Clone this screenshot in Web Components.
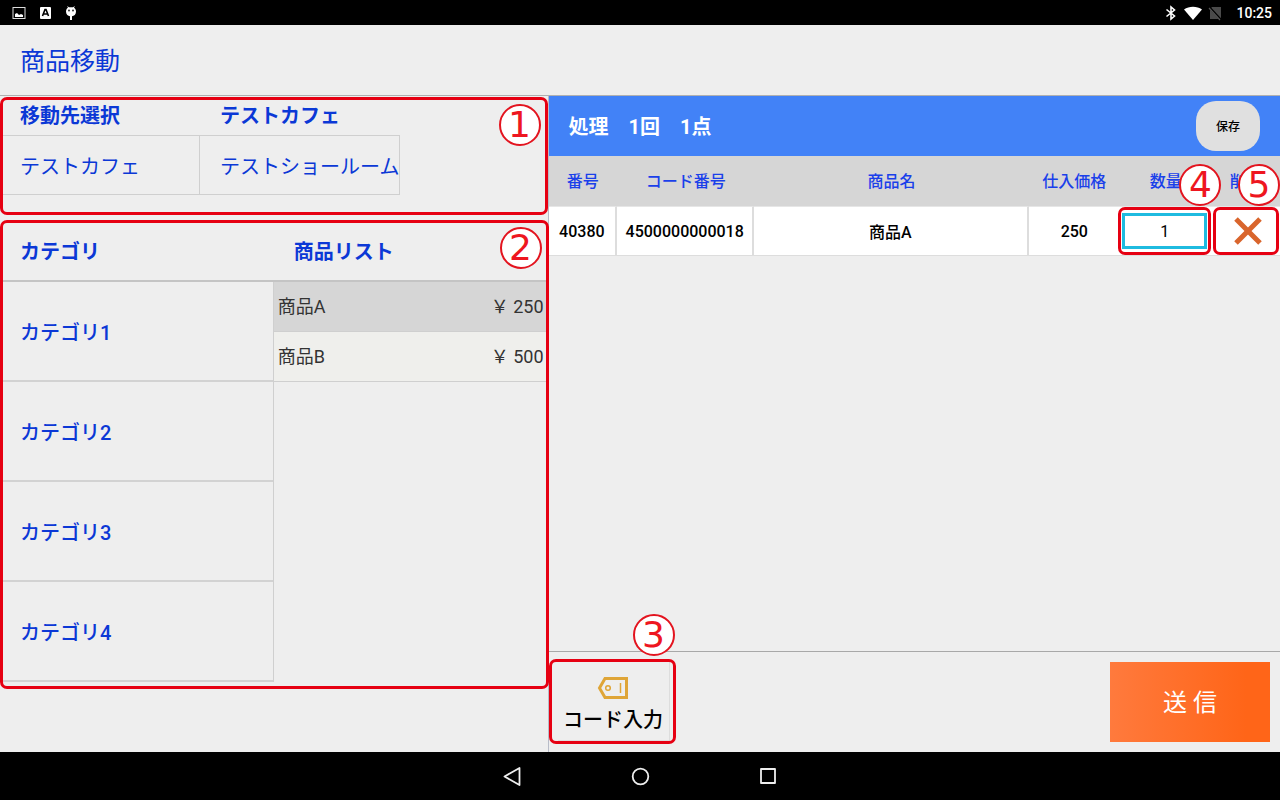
<!DOCTYPE html>
<html lang="ja">
<head>
<meta charset="utf-8">
<meta name="viewport" content="width=device-width, initial-scale=1">
<title>商品移動</title>
<style>
  html, body { margin: 0; }
  body {
    --blue: #0b38d6;
    --red: #e60012;
    --line: #cfcfcf;
    background: #eee;
    color: #000;
    font-family: Roboto, "Noto Sans CJK JP", sans-serif;
    font-size: 16px;
  }
</style>
</head>
<body>
<stock-app></stock-app>

<template id="status-bar">
  <style>
    :host { display: flex; align-items: center; gap: 12px; height: 25px; padding: 0 8px 0 12px; background: #000; color: #fff; }
    .left { display: flex; flex: 1; gap: 12px; }
    .right { display: flex; gap: 6px; align-items: center; }
    svg { display: block; width: 14px; height: 16px; }
    .wide { width: 18px; }
    time { font-size: 14px; font-weight: 500; line-height: 26px; margin-left: 8px; }
  </style>
  <div class="left">
    <svg viewBox="0 0 14 16"><rect x="1" y="2.500" width="12" height="11" fill="none" stroke="#ddd"/><path d="M3 12V9l2-1 2 2 2-1 2 1v2z" fill="#fff"/></svg>
    <svg viewBox="0 0 14 16"><rect x="2" y="2" width="11" height="12" rx="1" fill="#fff"/><path d="M4.500 11L7 4.500h1L10.500 11M5.500 9h4" fill="none" stroke="#000" stroke-width="1.600"/></svg>
    <svg viewBox="0 0 14 16"><path d="M2 6.500C2 4 3.500 3 4 2.700L3 1l2 1.200h4L11 1l-1 1.700C11.500 3.800 12 5 12 6.500 12 9.500 10 11 8 11.300V15H6v-3.700C4 11 2 9.500 2 6.500z" fill="#fff"/><circle cx="5" cy="5.500" r="1" fill="#333"/><circle cx="9" cy="5.500" r="1" fill="#333"/></svg>
  </div>
  <div class="right">
    <svg viewBox="0 0 14 16"><path d="M2.500 4.500L10.500 11 7 14V2l3.500 3L2.500 11.500" fill="none" stroke="#fff" stroke-width="1.600"/></svg>
    <svg class="wide" viewBox="0 0 18 16"><path d="M0 4.500C5 .8 13 .8 18 4.500L9 15z" fill="#fff"/></svg>
    <svg viewBox="0 0 14 16"><path d="M4 2h9v12H2V4z" fill="#4a4a4a"/><path d="M1 2l12 13" stroke="#000" stroke-width="2.500"/><path d="M1 3l11 12" stroke="#555" stroke-width="1.200"/></svg>
    <time>10:25</time>
  </div>
</template>

<template id="nav-bar">
  <style>
    :host { display: flex; justify-content: center; align-items: center; gap: 104px; height: 48px; background: #000; }
    button { display: block; width: 24px; height: 24px; padding: 0; border: 0; background: none; }
    svg { display: block; }
    svg * { fill: none; stroke: #eee; stroke-width: 1.800; stroke-linejoin: round; }
  </style>
  <button aria-label="戻る"><svg width="24" height="24" viewBox="0 0 24 24"><path d="M4.500 12.500L19.500 4v17z"/></svg></button>
  <button aria-label="ホーム"><svg width="24" height="24" viewBox="0 0 24 24"><circle cx="12.500" cy="12.500" r="7.800"/></svg></button>
  <button aria-label="履歴"><svg width="24" height="24" viewBox="0 0 24 24"><rect x="5" y="5" width="14" height="14"/></svg></button>
</template>

<template id="callout-frame">
  <style>
    :host { position: absolute; box-sizing: border-box; border: 3px solid var(--red); border-radius: 7px; pointer-events: none; z-index: 2; }
    .no {
      position: absolute; top: var(--no-top, 4px); right: var(--no-right, 4px);
      box-sizing: border-box; width: 42px; height: 42px; border: 2px solid #e3141f; border-radius: 50%;
      background: #fff; color: #ee1620; text-align: center;
      font: 36px/38px "DejaVu Sans", sans-serif;
    }
  </style>
  <span class="no"><slot></slot></span>
</template>

<template id="destination-picker">
  <style>
    :host { display: block; position: relative; height: 120px; color: var(--blue); font-size: 20px; }
    .cols { display: grid; grid-template-columns: 200px 200px; grid-template-rows: 39px 60px; }
    h2 { margin: 0; padding-left: 20px; font-size: 20px; font-weight: 700; line-height: 40px; }
    button {
      box-sizing: border-box; height: 60px; padding: 0 0 0 20px; border: 1px solid var(--line); border-left-width: 0;
      background: none; color: inherit; font: inherit; text-align: left; white-space: nowrap; overflow: hidden;
    }
    callout-frame { inset: 1px 0 1px 0; }
  </style>
  <div class="cols">
    <h2>移動先選択</h2><h2>テストカフェ</h2>
    <button>テストカフェ</button><button>テストショールーム</button>
  </div>
  <callout-frame>1</callout-frame>
</template>

<template id="product-picker">
  <style>
    :host { display: block; position: relative; margin-top: 4px; margin-bottom: 63px; padding-bottom: 7px; }
    .heads, .lists { display: grid; grid-template-columns: 1fr 1fr; }
    .heads { height: 62px; box-sizing: border-box; border-bottom: 2px solid #c4c4c4; }
    h2 { margin: 0; padding-left: 20px; color: var(--blue); font-size: 20px; font-weight: 700; line-height: 64px; }
    .cats { display: grid; grid-auto-rows: 100px; border-right: 1px solid var(--line); }
    .cats button {
      box-sizing: border-box; padding: 0 0 0 20px; border: 0; border-bottom: 2px solid #d2d2d2; background: none;
      color: var(--blue); font: inherit; font-size: 20px; font-weight: 500; text-align: left;
    }
    .items { display: grid; grid-auto-rows: 50px; align-content: start; }
    .items button {
      display: flex; justify-content: space-between; align-items: center; box-sizing: border-box;
      padding: 0 4px 4px; border: 0; border-bottom: 1px solid var(--line); background: #efefec; color: #333;
      font: inherit; font-size: 18px;
    }
    .items .on { background: #d6d6d6; }
    callout-frame { inset: 0 -1px 0 0; }
  </style>
  <div class="heads"><h2>カテゴリ</h2><h2>商品リスト</h2></div>
  <div class="lists">
    <div class="cats"><button>カテゴリ1</button><button>カテゴリ2</button><button>カテゴリ3</button><button>カテゴリ4</button></div>
    <div class="items">
      <button class="on"><span>商品A</span><span>￥ 250</span></button>
      <button><span>商品B</span><span>￥ 500</span></button>
    </div>
  </div>
  <callout-frame>2</callout-frame>
</template>

<template id="transfer-table">
  <style>
    :host { display: block; }
    table { width: 100%; table-layout: fixed; border-collapse: separate; border-spacing: 0; }
    .c3 { width: 9.375%; } .c4 { width: 12.500%; } .c6 { width: 18.750%; } .c12 { width: 37.500%; }
    th { height: 48px; padding: 0 0 2px; background: #d6d6d6; color: #1a40ea; font-weight: 500; white-space: nowrap; }
    td {
      position: relative; box-sizing: border-box; height: 50px; padding: 0; background: #fff; text-align: center; font-weight: 500;
      border-top: 1px solid #e6e6e6; border-bottom: 1px solid #ddd; border-right: 2px solid #ddd;
    }
    td:nth-last-child(-n+3) { border-right: 0; }
    input {
      display: block; box-sizing: border-box; width: calc(100% - 6px); height: 36px; margin: 0 4px 0 2px; padding: 0;
      border: 3px solid #1fbbe0; background: #fff; color: #000; font: inherit; font-weight: 400; text-align: center;
    }
    .del { display: block; margin: 0 auto; padding: 0; border: 0; background: none; }
    .del svg { display: block; margin-left: 4px; }
    .qty { inset: 0 0 0 -2px; --no-top: -46px; --no-right: -13px; }
    .rm { inset: 0 1px 0 2px; --no-top: -46px; --no-right: -4px; }
  </style>
  <table>
    <colgroup><col class="c3"><col class="c6"><col class="c12"><col class="c4"><col class="c4"><col class="c3"></colgroup>
    <thead><tr><th>番号</th><th>コード番号</th><th>商品名</th><th>仕入価格</th><th>数量</th><th>削除</th></tr></thead>
    <tbody><tr>
      <td>40380</td><td>4500000000018</td><td>商品A</td><td>250</td>
      <td><input aria-label="数量" value="1"><callout-frame class="qty">4</callout-frame></td>
      <td><button class="del" aria-label="削除"><svg width="28" height="28" viewBox="0 0 28 28"><path d="M2 2l24 24M26 2L2 26" stroke="#d9652c" stroke-width="5" fill="none"/></svg></button><callout-frame class="rm">5</callout-frame></td>
    </tr></tbody>
  </table>
</template>

<template id="transfer-panel">
  <style>
    :host { display: flex; flex-direction: column; }
    .sum { display: flex; align-items: center; justify-content: space-between; height: 60px; padding: 0 20px; background: #4282f7; color: #fff; }
    .sum strong { font-size: 20px; line-height: 60px; padding-top: 2px; white-space: pre; }
    .save { width: 64px; height: 50px; padding: 0 0 2px; border: 0; border-radius: 20px; background: #e0e0e0; color: #000; font: inherit; font-size: 12px; font-weight: 500; }
    transfer-table { flex: 1; }
    footer { display: flex; justify-content: space-between; box-sizing: border-box; height: 101px; padding: 10px 10px 10px 9px; border-top: 1px solid #a8a8a8; }
    .code { position: relative; }
    .code button {
      display: flex; flex-direction: column; align-items: center; justify-content: center; gap: 6px;
      box-sizing: border-box; width: 112px; height: 79px; padding: 9px 0 0; border: 0; border-right: 1px solid #ddd; border-bottom: 1px solid #ddd;
      background: none; color: #000; font: inherit; font-size: 20px; font-weight: 500; line-height: 30px;
    }
    .code svg { display: block; }
    callout-frame { inset: -3px -6px -2px -9px; --no-top: -48px; --no-right: -2px; }
    .send { width: 160px; height: 80px; padding: 0 0 4px; border: 0; background: linear-gradient(90deg, #ff7a3d, #ff6518 85%); color: #fff; font: inherit; font-size: 24px; }
  </style>
  <div class="sum"><strong>処理　1回　1点</strong><button class="save">保存</button></div>
  <transfer-table></transfer-table>
  <footer>
    <div class="code">
      <button><svg width="32" height="22" viewBox="0 0 32 22"><path d="M8 1.500H29.500V20.500H8L2.500 11z" fill="none" stroke="#dfa537" stroke-width="3"/><circle cx="11" cy="11" r="2.300" fill="none" stroke="#dfa537" stroke-width="1.500"/><path d="M23.500 6v10" stroke="#dfa537" stroke-width="1.500"/></svg>コード入力</button>
      <callout-frame>3</callout-frame>
    </div>
    <button class="send">送 信</button>
  </footer>
</template>

<template id="stock-app">
  <style>
    :host { display: flex; flex-direction: column; min-height: 100vh; }
    h1 { box-sizing: border-box; height: 71px; margin: 0; padding: 2px 0 0 20px; border-bottom: 1px solid #b0b0b0; color: var(--blue); font-size: 25px; font-weight: 400; line-height: 70px; }
    main { flex: 1; display: grid; grid-template-columns: 3fr 4fr; }
    .pick { border-right: 1px solid #b8bcc8; }
  </style>
  <status-bar></status-bar>
  <h1>商品移動</h1>
  <main>
    <div class="pick"><destination-picker></destination-picker><product-picker></product-picker></div>
    <transfer-panel></transfer-panel>
  </main>
  <nav-bar></nav-bar>
</template>

<script>
  const names = ["callout-frame", "status-bar", "nav-bar", "destination-picker", "product-picker", "transfer-table", "transfer-panel", "stock-app"];
  for (const name of names) {
    customElements.define(name, class extends HTMLElement {
      constructor() {
        super();
        this.attachShadow({ mode: "open" }).append(document.getElementById(name).content.cloneNode(true));
      }
    });
  }
</script>
</body>
</html>
